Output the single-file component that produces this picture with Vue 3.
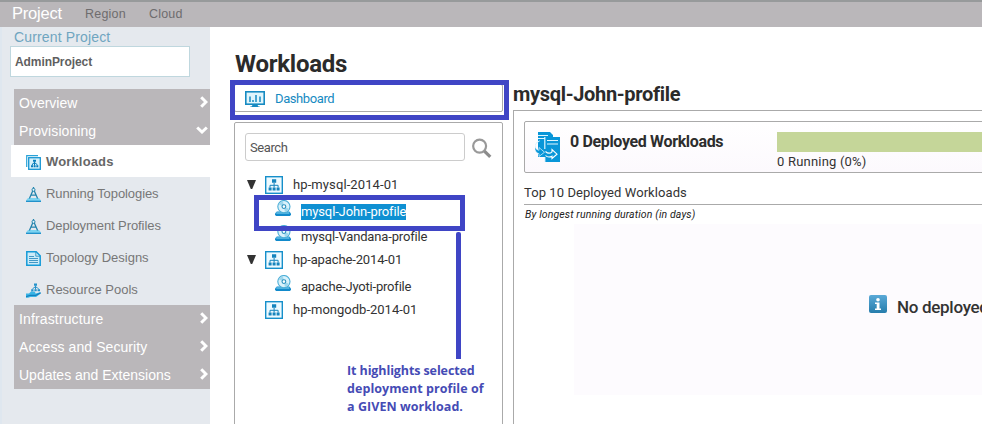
<script setup>
const topTabs = [
  { label: 'Region', cls: 'region' },
  { label: 'Cloud', cls: 'cloud' },
]
const workItems = [
  { label: 'Workloads', icon: 'work', active: true, cls: 'w1' },
  { label: 'Running Topologies', icon: 'compass', cls: 'w2' },
  { label: 'Deployment Profiles', icon: 'compass', cls: 'w3' },
  { label: 'Topology Designs', icon: 'doc', cls: 'w4' },
  { label: 'Resource Pools', icon: 'pool', cls: 'w5' },
]
const lower = [
  { label: 'Infrastructure', cls: 'n3' },
  { label: 'Access and Security', cls: 'n4' },
  { label: 'Updates and Extensions', cls: 'n5' },
]
const tree = [
  { label: 'hp-mysql-2014-01', open: true, cls: 't1' },
  { label: 'mysql-John-profile', child: true, selected: true, cls: 't2' },
  { label: 'mysql-Vandana-profile', child: true, cls: 't3' },
  { label: 'hp-apache-2014-01', open: true, cls: 't4' },
  { label: 'apache-Jyoti-profile', child: true, cls: 't5' },
  { label: 'hp-mongodb-2014-01', cls: 't6' },
]
</script>

<template>
  <div class="app">
    <header class="topbar">
      <span class="project">Project</span>
      <span v-for="t in topTabs" :key="t.label" :class="['tab', t.cls]">{{ t.label }}</span>
    </header>
    <div class="body">
      <aside class="side">
        <div class="current"><span>Current Project</span></div>
        <div class="picker"><span>AdminProject</span></div>
        <nav class="nav">
          <div class="group"><span class="n1">Overview</span>
            <svg class="chev" viewBox="0 0 8 12"><path d="M1.2 1.2 6 6 1.2 10.8" /></svg>
          </div>
          <div class="group"><span class="n2">Provisioning</span>
            <svg class="chev down" viewBox="0 0 12 8"><path d="M1.2 1.5 6 6 10.8 1.5" /></svg>
          </div>
          <div v-for="w in workItems" :key="w.label" :class="['item', { active: w.active }]">
            <svg v-if="w.icon === 'work'" class="ico" viewBox="0 0 15 15">
              <path d="M.7 12V.7H12" fill="none" stroke="#2aa3d8" stroke-width="1.2" />
              <rect x="2.7" y="2.7" width="11.6" height="11.6" fill="#d6f1fb" stroke="#1795d3" stroke-width="1.3" />
              <path d="M7 4.8h3v2H7zM5 10.2h2v2H5zM7.6 10.2h2v2h-2zM10.3 10.2h2v2h-2z" fill="#087dbb" />
              <path d="M8.5 6.5v4M6 10.3l1-2h3l1.4 2" fill="none" stroke="#087dbb" />
            </svg>
            <svg v-else-if="w.icon === 'compass'" class="ico" viewBox="0 0 15 15">
              <path d="M2 11h11l2 2.5v1.3H0v-1.3z" fill="#7bd3f1" /><rect y="13.7" width="15" height="1.2" fill="#1689c6" />
              <circle cx="7.5" cy="2.8" r="1.5" fill="#e5f7fc" stroke="#2384ad" /><path d="M7.5 0v1.4M6.7 4 3.4 11.5M8.3 4l3.3 7.5M5.2 8.2h4.6" fill="none" stroke="#2384ad" stroke-width="1.3" />
            </svg>
            <svg v-else-if="w.icon === 'doc'" class="ico" viewBox="0 0 15 15">
              <path d="M.8.8h9.4l4 4v9.4H.8z" fill="#ccebf8" stroke="#159bd8" stroke-width="1.5" /><path d="M9.8 1v4.2H14M3 5.5h5M3 7.5h9M3 9.5h9M3 11.5h9" fill="none" stroke="#318fc0" stroke-width=".9" />
            </svg>
            <svg v-else class="ico" viewBox="0 0 15 15">
              <path d="M0 10.5h3l2.3-2.2 3.7.5.5 1.7 4.6-1.3.7 1.2-4.8 3.7-5.5-.2L2 14.8H0z" fill="#39b4e5" />
              <path d="M0 13.7 4.5 12.3h5.2l5-2.5" fill="none" stroke="#137fbe" stroke-width="1.2" />
              <path d="M8 .5h3v2.2H8zM5.2 6.2h2.3v2H5.2zM8.4 6.2h2.3v2H8.4zM11.6 6.2H14v2h-2.4z" fill="#2492ca" />
              <path d="M9.5 2.5v4M6.5 6.3l1.5-2h3l1.8 2" fill="none" stroke="#2492ca" />
            </svg>
            <span :class="w.cls">{{ w.label }}</span>
          </div>
          <div v-for="g in lower" :key="g.label" class="group"><span :class="g.cls">{{ g.label }}</span>
            <svg class="chev" viewBox="0 0 8 12"><path d="M1.2 1.2 6 6 1.2 10.8" /></svg>
          </div>
        </nav>
      </aside>

      <section class="middle">
        <h1><span>Workloads</span></h1>
        <div class="dash">
          <svg class="monitor" viewBox="0 0 20 17">
            <rect x=".8" y=".8" width="18.4" height="12.4" fill="#e0f5fc" stroke="#168ac2" stroke-width="1.6" />
            <path d="M5 5.5V11M8 9v2M11 4v7M15 5.5V11" stroke="#168ac2" stroke-width="1.5" />
            <path d="M7.5 14h5l1 1.4h1.3V16H5.2v-.6h1.3z" fill="#168ac2" />
          </svg>
          <span>Dashboard</span>
        </div>
        <div class="panel">
          <div class="searchrow">
            <div class="input"><span>Search</span></div>
            <svg class="mag" viewBox="0 0 21 21">
              <circle cx="8" cy="8" r="6.8" fill="#fff" stroke="#999" stroke-width="2.3" /><path d="m13 13.2 6.2 6.1" stroke="#8c8c8c" stroke-width="3.4" />
            </svg>
          </div>
          <div v-for="n in tree" :key="n.label" :class="['node', { child: n.child }]">
            <svg v-if="!n.child" class="tri" viewBox="0 0 9 10"><path v-if="n.open" d="M0 0h9L5.2 9H3.8z" /></svg>
            <svg v-if="!n.child" class="net" viewBox="0 0 18 18">
              <rect x=".7" y=".7" width="16.6" height="16.6" fill="#eefaff" stroke="#168fca" stroke-width="1.4" />
              <path d="M7 3.2h4.2v3.6H7zM3.6 11.4h3v3h-3zM7.6 11.4h3v3h-3zM11.6 11.4h3v3h-3z" fill="#1684bd" />
              <path d="M9.1 7v4.5M5 11.5V9.3h8.1v2.2" fill="none" stroke="#1684bd" />
            </svg>
            <svg v-else class="disc" viewBox="0 0 16 17">
              <path d="M1.8 11.5h12.5l1.7 2V15l-1.2 1H1.2L0 15v-1.5z" fill="#128acb" /><path d="M1.3 13h13" stroke="#8cdbf5" />
              <circle cx="8.9" cy="6.6" r="6.1" fill="#d9f2fb" stroke="#4caed7" stroke-width="1.1" />
              <path d="M8.9 6.6 3.8 4.6A5.5 5.5 0 0 1 8 1.1zM8.9 6.6l5 2.1a5.5 5.5 0 0 1-4 3.3z" fill="#9fd7ed" />
              <circle cx="8.9" cy="6.6" r="1.9" fill="#fff" stroke="#288fbd" stroke-width="1.1" />
            </svg>
            <span :class="['name', n.cls, { selected: n.selected }]">{{ n.label }}</span>
          </div>
        </div>
      </section>

      <main class="right">
        <h2><span>mysql-John-profile</span></h2>
        <div class="detail">
          <div class="card">
            <svg class="deploy" viewBox="0 0 25 30">
              <path d="M3 0h12l3 3v2h7v25H10v-5H3z" fill="#0996d8" />
              <path d="M3 3.5h10M3 6.5h6.5M9.8 5v12M9.8 25v5M12 8.5h11M12 12h11" stroke="#dff6ff" stroke-width="1.2" fill="none" />
              <path d="M4.5 9C-1 11-1.5 17 4 18.3v-2.8l5.5 4.7L4 24.5v-2.8C-1.5 20.5-2 12 4.5 9z" fill="#0996d8" stroke="#e9f9ff" stroke-width=".7" />
              <path d="M10.5 19.5q3.5 3.2 6.5.3v-2.3l5 4.7-5 4.3v-2.3q-4 2-6.5-.7" fill="#0996d8" stroke="#fff" stroke-width="1.1" />
            </svg>
            <strong><span>0 Deployed Workloads</span></strong>
            <div class="meter"><div class="bar"></div><span>0 Running (0%)</span></div>
          </div>
          <div class="top10"><span>Top 10 Deployed Workloads</span></div>
          <div class="sub"><span>By longest running duration (in days)</span></div>
          <div class="empty">
            <svg class="info" viewBox="0 0 18 18">
              <defs><linearGradient id="ig" x2="0" y2="1"><stop stop-color="#5aa9d7" /><stop offset="1" stop-color="#267dac" /></linearGradient></defs>
              <rect width="18" height="18" rx="2" fill="url(#ig)" /><circle cx="9" cy="4.7" r="1.8" fill="#fff" />
              <path d="M6 7.5h4.5v6H12V15H6v-1.5h1.7V9H6z" fill="#fff" />
            </svg>
            <span>No deployed</span>
          </div>
        </div>
      </main>
      <div class="mark dashmark"></div>
      <div class="mark selmark"></div>
      <div class="line"></div>
      <p class="note"><span class="a1">It highlights selected</span><span class="a2">deployment profile of</span><span class="a3">a GIVEN workload.</span></p>
    </div>
  </div>
</template>

<style>
body { margin: 0; overflow: hidden; background: #fff; }
</style>
<style scoped>
* { box-sizing: border-box; }
.app { width: 982px; height: 424px; position: relative; overflow: hidden; font-family: Roboto, "Liberation Sans", sans-serif; color: #333; white-space: nowrap; }
svg { display: block; flex: none; }
.topbar { height: 27px; background: #bab7ba; border-top: 2px solid #979a9b; display: flex; align-items: center; padding-left: 12px; font-family: "Liberation Sans", sans-serif; }
.project { font-size: 16.5px; color: #fff; width: 73px; letter-spacing: -.2px; margin-top: -2px; }
.tab { font-size: 12.5px; color: #6e6c6e; width: 64px; letter-spacing: .2px; margin-top: -2px; }
.body { display: flex; height: 397px; }
.side { width: 210px; flex: none; background: #e5e9ee; border-left: 2px solid #dfe7ef; font-family: "Liberation Sans", sans-serif; }
.current { height: 19px; line-height: 20px; padding-left: 12px; color: #6fa5c0; font-size: 14px; letter-spacing: .15px; }
.picker { margin-left: 8px; width: 180px; height: 31px; border: 1px solid #bfd7de; background: #fff; padding-left: 4px; line-height: 30px; font-size: 12px; font-weight: bold; color: #5f5f5f; letter-spacing: -.08px; }
.nav { margin-top: 12px; }
.group { height: 28px; margin-left: 12px; background: #bab7ba; color: #fff; font-size: 14px; display: flex; align-items: center; justify-content: space-between; padding: 0 2px 0 5px; }
.n2, .n4 { letter-spacing: .08px; }
.n3 { letter-spacing: .14px; }
.chev { width: 8px; height: 12px; fill: none; stroke: #fff; stroke-width: 3; margin-top: -3px; }
.chev.down { width: 12px; height: 8px; }
.item { height: 32px; margin-left: 9px; padding-left: 15px; display: flex; align-items: center; gap: 5px; font-size: 13px; color: #777; }
.w1 { letter-spacing: .15px; }
.w2, .w3 { letter-spacing: -.08px; }
.active { background: #fff; font-weight: bold; color: #666; }
.ico { width: 15px; height: 15px; margin-top: 3px; }
.middle { width: 299px; flex: none; padding-left: 24px; }
h1, h2 { margin: 0; color: #2b2b2b; font-weight: 700; }
h1 { height: 57px; padding: 22px 0 0 1px; line-height: 31px; font-size: 24px; letter-spacing: -.25px; }
.dash { width: 269px; height: 28px; border: 1px solid #aaa; border-radius: 2px; padding-left: 10px; display: flex; align-items: center; gap: 10px; color: #168ac2; font-size: 13px; letter-spacing: -.4px; }
.monitor { width: 20px; height: 17px; margin-top: 2px; }
.panel { margin-top: 10px; width: 269px; height: 310px; border: 1px solid #aaa; border-radius: 2px; padding: 10px; }
.searchrow { display: flex; gap: 7px; align-items: center; height: 28px; margin-bottom: 11px; }
.input { width: 220px; height: 28px; border: 1px solid #ccc; border-radius: 3px; font-size: 13px; line-height: 28px; padding-left: 4px; color: #555; letter-spacing: -.4px; flex: none; }
.mag { width: 20px; height: 21px; margin-top: 2px; }
.node { height: 25px; padding-left: 2px; display: flex; align-items: center; font-size: 13px; }
.tri { width: 9px; height: 10px; fill: #333; margin-right: 9px; }
.net { width: 18px; height: 18px; margin-right: 10px; }
.child { padding-left: 30px; }
.disc { width: 16px; height: 17px; margin: -3px 10px 0 0; }
.name { line-height: 16px; }
.child .name { margin-top: 4px; }
.t1 { letter-spacing: .1px; }
.t2, .t4 { letter-spacing: -.13px; }
.t3 { letter-spacing: -.16px; }
.t5 { letter-spacing: -.2px; }
.selected { background: #0f90d2; color: #fff; }
.right { flex: 1; min-width: 0; padding-left: 4px; overflow: hidden; }
h2 { height: 83px; padding-top: 54px; line-height: 27px; font-size: 20px; letter-spacing: -.32px; }
.detail { width: 500px; height: 330px; border: 1px solid #aaa; padding: 10px; }
.card { width: 480px; height: 52px; border: 1px solid #aaa; border-radius: 2px; display: flex; padding: 10px 0 0 10px; background: linear-gradient(#fff, #fcf9fd); }
.deploy { width: 25px; height: 30px; }
strong { width: 217px; padding-left: 10px; font-size: 16px; line-height: 19px; font-weight: 700; color: #2d2d2d; letter-spacing: -.35px; }
.meter { flex: 1; margin-left: 0; font-size: 13px; line-height: 19px; letter-spacing: .2px; }
.bar { height: 20px; background: #c5d699; }
.top10 { height: 32px; border-bottom: 1px solid #aaa; line-height: 39px; font-size: 13px; letter-spacing: .07px; }
.sub { height: 19px; line-height: 20px; font-style: italic; font-size: 10.5px; padding-left: 1px; color: #222; letter-spacing: .13px; }
.empty { margin-left: 50px; height: 171px; background: #fdfbfe; display: flex; align-items: center; gap: 10px; padding-left: 295px; font-size: 17px; font-weight: 500; letter-spacing: -.3px; }
.info { width: 18px; height: 18px; margin-top: -11px; }
.empty span { margin-top: -5px; }
.mark { position: absolute; border: 5px solid #3f45c5; }
.dashmark { left: 230px; top: 80px; width: 279px; height: 40px; }
.selmark { left: 254px; top: 195px; width: 211px; height: 36px; }
.line { position: absolute; left: 456px; top: 232px; width: 5px; height: 127px; background: #3f45c5; border-radius: 2px 2px 0 0; }
.note { position: absolute; left: 347px; top: 362px; margin: 0; display: grid; justify-items: start; line-height: 18px; font: 700 12.5px/18px "Open Sans", sans-serif; color: #454bb5; }
.a1, .a2, .a3 { letter-spacing: .06px; }
.a1 { letter-spacing: -.1px; }
</style>
